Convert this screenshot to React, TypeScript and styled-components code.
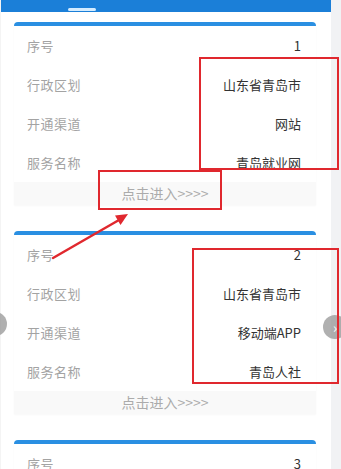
import React from "react";
import styled, { createGlobalStyle } from "styled-components";

const Global = createGlobalStyle`
  html, body { margin: 0; padding: 0; background: #ffffff; }
  body { font-family: "Noto Sans CJK SC", "Noto Sans", sans-serif; overflow: hidden; }
  * { box-sizing: border-box; }
`;

const Page = styled.div`
  position: relative;
  width: 341px;
  height: 469px;
  display: flex;
  overflow: hidden;
`;

const Main = styled.div`
  width: 331px;
  display: flex;
  flex-direction: column;
  border-left: 1px solid #f4f4f4;
`;

const SideStrip = styled.div`
  flex: 1;
  background: #f1f2f4;
`;

const Header = styled.div`
  height: 12px;
  background: #1b7fd8;
  position: relative;
  flex-shrink: 0;
  display: flex;
  align-items: flex-end;
  padding-left: 67px;
  padding-bottom: 1px;
`;

const Indicator = styled.div`
  width: 28px;
  height: 3px;
  border-radius: 2px;
  background: #d4ecff;
`;

const List = styled.div`
  display: flex;
  flex-direction: column;
  gap: 26px;
  padding: 10px 15px 0 13px;
`;

const Card = styled.div`
  background: #ffffff;
  border-top: 4px solid #2a8fe2;
  border-radius: 4px 4px 0 0;
  display: flex;
  flex-direction: column;
  box-shadow: 0 1px 2px rgba(0, 0, 0, 0.03);
`;

const Row = styled.div`
  height: 39px;
  display: flex;
  align-items: center;
  justify-content: space-between;
  padding: 0 15px 0 13px;
  font-size: 13px;
`;

const Label = styled.span`
  color: #a3a3a3;
  letter-spacing: 0.5px;
`;

const Value = styled.span`
  color: #333333;
`;

const Footer = styled.div`
  height: 23px;
  background: #f9f9f9;
  display: flex;
  align-items: center;
  justify-content: center;
  font-size: 14px;
  color: #ababab;
  padding-bottom: 2px;
`;

const RedBox = styled.div<{ $l: number; $t: number; $w: number; $h: number }>`
  position: absolute;
  left: ${(p) => p.$l}px;
  top: ${(p) => p.$t}px;
  width: ${(p) => p.$w}px;
  height: ${(p) => p.$h}px;
  border: 2px solid #e0282e;
  pointer-events: none;
`;

const NavButton = styled.div<{ $l: number; $t: number }>`
  position: absolute;
  left: ${(p) => p.$l}px;
  top: ${(p) => p.$t}px;
  width: 24px;
  height: 24px;
  border-radius: 50%;
  background: rgba(150, 150, 150, 0.75);
  color: #ffffff;
  font-size: 14px;
  display: flex;
  align-items: center;
  justify-content: center;
`;

const ArrowSvg = styled.svg`
  position: absolute;
  left: 0;
  top: 0;
  pointer-events: none;
`;

type Item = { no: string; region: string; channel: string; name: string };

const items: Item[] = [
  { no: "1", region: "山东省青岛市", channel: "网站", name: "青岛就业网" },
  { no: "2", region: "山东省青岛市", channel: "移动端APP", name: "青岛人社" },
  { no: "3", region: "山东省青岛市", channel: "网站", name: "青岛就业网" },
];

export default function App() {
  return (
    <Page>
      <Global />
      <Main>
        <Header>
          <Indicator />
        </Header>
        <List>
          {items.map((it) => (
            <Card key={it.no}>
              <Row>
                <Label>序号</Label>
                <Value>{it.no}</Value>
              </Row>
              <Row>
                <Label>行政区划</Label>
                <Value>{it.region}</Value>
              </Row>
              <Row>
                <Label>开通渠道</Label>
                <Value>{it.channel}</Value>
              </Row>
              <Row>
                <Label>服务名称</Label>
                <Value>{it.name}</Value>
              </Row>
              <Footer>点击进入&gt;&gt;&gt;&gt;</Footer>
            </Card>
          ))}
        </List>
      </Main>
      <SideStrip />
      <NavButton $l={-17} $t={312} />
      <NavButton $l={323} $t={315}>›</NavButton>
      <RedBox $l={199} $t={57} $w={140} $h={113} />
      <RedBox $l={98} $t={170} $w={124} $h={40} />
      <RedBox $l={192} $t={248} $w={147} $h={136} />
      <ArrowSvg width="341" height="469" viewBox="0 0 341 469">
        <line x1="53" y1="258" x2="119" y2="220" stroke="#e0282e" strokeWidth="2.5" strokeLinecap="round" />
        <polygon points="128,214 120.5,225 115,215.5" fill="#e0282e" />
      </ArrowSvg>
    </Page>
  );
}
